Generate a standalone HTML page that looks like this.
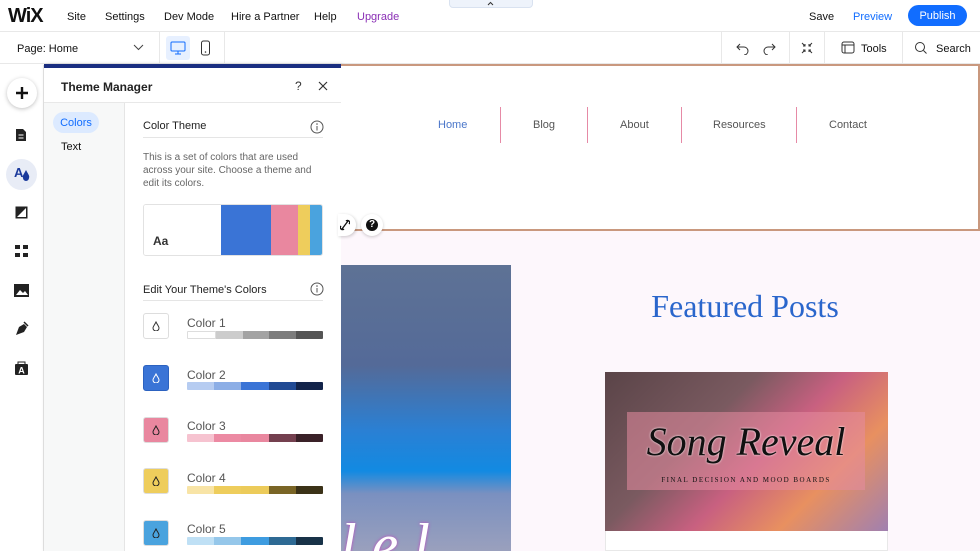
<!DOCTYPE html>
<html><head><meta charset="utf-8"><style>
*{box-sizing:border-box;margin:0;padding:0}
body{width:980px;height:551px;overflow:hidden;font-family:"Liberation Sans",sans-serif;background:#fff;position:relative;color:#222}
.a{position:absolute}
.t{font-size:11px;color:#111}
.sw{position:absolute;left:143px;width:26px;height:26px;border-radius:3px;border:1px solid #ddd;display:flex;align-items:center;justify-content:center}
.lbl{position:absolute;left:187px;font-size:12px;color:#555}
.bar{position:absolute;left:187px;width:136px;height:8px;display:flex;border-radius:1px;overflow:hidden}
.bar i{flex:1}
.nav{position:absolute;top:119px;font-size:11px;color:#555}
.sep{position:absolute;top:107px;width:1px;height:36px;background:#e68aa6}
</style></head><body>
<div class="a" style="left:0;top:0;width:980px;height:32px;border-bottom:1px solid #e8e8e8"></div>
<div class="a" style="left:8px;top:5px;font-size:20px;font-weight:bold;letter-spacing:-1px;color:#111">WiX</div>
<div class="a t" style="left:67px;top:11px">Site</div>
<div class="a t" style="left:105px;top:11px">Settings</div>
<div class="a t" style="left:164px;top:11px">Dev Mode</div>
<div class="a t" style="left:231px;top:11px">Hire a Partner</div>
<div class="a t" style="left:314px;top:11px">Help</div>
<div class="a t" style="left:357px;top:11px;color:#8a2fb5">Upgrade</div>
<div class="a" style="left:449px;top:-2px;width:84px;height:10px;background:#eef3fb;border:1px solid #d9e2f0;border-radius:0 0 4px 4px"></div>
<svg class="a" style="left:487px;top:1px" width="7" height="5"><path d="M1 4l2.5-2.5L6 4" stroke="#333" fill="none"/></svg>
<div class="a t" style="left:809px;top:11px">Save</div>
<div class="a t" style="left:853px;top:11px;color:#116dff">Preview</div>
<div class="a" style="left:908px;top:5px;width:59px;height:21px;border-radius:11px;background:#116dff;color:#fff;font-size:11px;text-align:center;line-height:22px;padding-top:0">Publish</div>
<div class="a" style="left:0;top:32px;width:980px;height:32px;border-bottom:1px solid #e8e8e8"></div>
<div class="a t" style="left:17px;top:43px">Page: Home</div>
<svg class="a" style="left:133px;top:44px" width="11" height="8"><path d="M1 1l4.5 4.5L10 1" stroke="#444" fill="none"/></svg>
<div class="a" style="left:159px;top:32px;width:1px;height:32px;background:#e8e8e8"></div>
<div class="a" style="left:166px;top:36px;width:24px;height:24px;background:#e7f0ff;border-radius:3px"></div>
<svg class="a" style="left:170px;top:41px" width="16" height="14"><rect x="1" y="1" width="14" height="9" rx="1" fill="none" stroke="#116dff"/><path d="M8 10v3M5 13h6" stroke="#116dff"/></svg>
<svg class="a" style="left:200px;top:40px" width="12" height="16"><rect x="1.5" y="1" width="8" height="14" rx="2" fill="none" stroke="#333"/><circle cx="5.5" cy="12" r=".8" fill="#333"/></svg>
<div class="a" style="left:224px;top:32px;width:1px;height:32px;background:#e8e8e8"></div>
<div class="a" style="left:721px;top:32px;width:1px;height:32px;background:#e8e8e8"></div>
<div class="a" style="left:789px;top:32px;width:1px;height:32px;background:#e8e8e8"></div>
<div class="a" style="left:824px;top:32px;width:1px;height:32px;background:#e8e8e8"></div>
<div class="a" style="left:902px;top:32px;width:1px;height:32px;background:#e8e8e8"></div>
<svg class="a" style="left:736px;top:41px" width="40" height="14"><path d="M4 3L1 6l3 3M1 6h7a4 4 0 010 8" stroke="#333" fill="none"/><path d="M36 3l3 3-3 3M39 6h-7a4 4 0 000 8" stroke="#333" fill="none"/></svg>
<svg class="a" style="left:800px;top:42px" width="14" height="12"><path d="M2 1l3 3M5 2v2H3M12 1L9 4M9 2v2h2M2 11l3-3M3 8h2v2M12 11L9 8M11 8H9v2" stroke="#333" fill="none"/></svg>
<svg class="a" style="left:841px;top:41px" width="14" height="13"><rect x="1" y="1" width="12" height="11" rx="2" fill="none" stroke="#333"/><path d="M1 4h12M4 4v8" stroke="#333"/></svg>
<div class="a t" style="left:861px;top:43px">Tools</div>
<svg class="a" style="left:914px;top:41px" width="14" height="14"><circle cx="6" cy="6" r="4.5" fill="none" stroke="#333"/><path d="M9.5 9.5l3 3" stroke="#333"/></svg>
<div class="a t" style="left:936px;top:43px">Search</div>
<div class="a" style="left:0;top:65px;width:44px;height:486px;background:#fff;border-right:1px solid #e5e5e5"></div>
<div class="a" style="left:7px;top:78px;width:30px;height:30px;border-radius:50%;background:#fff;box-shadow:0 1px 4px rgba(0,0,0,.25)"></div>
<svg class="a" style="left:14px;top:85px" width="16" height="16"><path d="M8 2v12M2 8h12" stroke="#111" stroke-width="2.4"/></svg>
<svg class="a" style="left:15px;top:128px" width="12" height="14"><path d="M1 1h7l3 3v9H1z" fill="#222"/><path d="M3.5 7h5M3.5 10h5" stroke="#fff"/></svg>
<div class="a" style="left:6px;top:159px;width:31px;height:31px;border-radius:50%;background:#e8ecf6"></div>
<div class="a" style="left:14px;top:165px;font-size:13px;font-weight:bold;color:#1b3a9c">A</div>
<svg class="a" style="left:22px;top:170px" width="8" height="11"><path d="M4 0C2 4 0 6 1 8a3 3 0 006 0C8 6 6 4 4 0z" fill="#1b3a9c"/></svg>
<svg class="a" style="left:15px;top:206px" width="13" height="13"><rect x=".5" y=".5" width="12" height="12" fill="#222"/><path d="M11 2v9H2z" fill="#fff"/></svg>
<svg class="a" style="left:15px;top:245px" width="13" height="13"><rect width="5" height="4" fill="#222"/><rect x="8" width="5" height="4" fill="#222"/><rect y="8" width="5" height="4" fill="#222"/><rect x="8" y="8" width="5" height="4" fill="#222"/></svg>
<svg class="a" style="left:14px;top:284px" width="15" height="13"><rect width="15" height="13" fill="#222"/><path d="M2 11l4-5 3 3 2-2 3 4z" fill="#fff"/></svg>
<svg class="a" style="left:14px;top:321px" width="15" height="15"><path d="M2 14l3-8 5-3 3 3-3 5z" fill="#222"/><path d="M10 1l4 4" stroke="#222" stroke-width="1.5"/></svg>
<svg class="a" style="left:14px;top:360px" width="15" height="16"><path d="M4 4V2h7v2" stroke="#222" fill="none"/><rect x="1" y="4" width="13" height="11" rx="1" fill="#222"/><text x="7.5" y="13.5" font-size="9" fill="#fff" text-anchor="middle" font-family="Liberation Sans" font-weight="bold">A</text></svg>
<div class="a" style="left:44px;top:64px;width:297px;height:487px;background:#fff;box-shadow:1px 0 4px rgba(0,0,0,.15)"></div>
<div class="a" style="left:44px;top:64px;width:297px;height:4px;background:#1a2e80"></div>
<div class="a" style="left:61px;top:80px;font-size:12px;font-weight:bold;color:#222">Theme Manager</div>
<div class="a" style="left:295px;top:79px;font-size:12px;color:#333">?</div>
<svg class="a" style="left:318px;top:81px" width="10" height="10"><path d="M1 1l8 8M9 1L1 9" stroke="#333" stroke-width="1.2"/></svg>
<div class="a" style="left:44px;top:102px;width:297px;height:1px;background:#e8e8e8"></div>
<div class="a" style="left:44px;top:103px;width:81px;height:448px;background:#f7f8f8;border-right:1px solid #e5e5e5"></div>
<div class="a" style="left:53px;top:112px;width:46px;height:21px;border-radius:11px;background:#dceaff;color:#116dff;font-size:11px;text-align:center;line-height:22px">Colors</div>
<div class="a t" style="left:61px;top:141px">Text</div>
<div class="a" style="left:143px;top:120px;font-size:11px;color:#222">Color Theme</div>
<svg class="a" style="left:310px;top:120px" width="14" height="14"><circle cx="7" cy="7" r="6" fill="none" stroke="#555"/><path d="M7 6v4.5" stroke="#555"/><circle cx="7" cy="4" r=".8" fill="#555"/></svg>
<div class="a" style="left:143px;top:137px;width:180px;height:1px;background:#e5e5e5"></div>
<div class="a" style="left:143px;top:151px;width:175px;font-size:10px;line-height:13px;color:#666">This is a set of colors that are used across your site. Choose a theme and edit its colors.</div>
<div class="a" style="left:143px;top:204px;width:180px;height:52px;border:1px solid #e2e2e2;border-radius:3px;overflow:hidden;display:flex">
<div style="width:77px;background:#fff;position:relative"><span style="position:absolute;left:9px;top:29px;font-size:12px;font-weight:bold;color:#333">Aa</span></div>
<div style="width:50px;background:#3a74d6"></div><div style="width:27px;background:#e9879f"></div><div style="width:12px;background:#eecd5c"></div><div style="flex:1;background:#4aa3de"></div></div>
<div class="a" style="left:143px;top:284px;font-size:11px;color:#222">Edit Your Theme's Colors</div>
<svg class="a" style="left:310px;top:282px" width="14" height="14"><circle cx="7" cy="7" r="6" fill="none" stroke="#555"/><path d="M7 6v4.5" stroke="#555"/><circle cx="7" cy="4" r=".8" fill="#555"/></svg>
<div class="a" style="left:143px;top:300px;width:180px;height:1px;background:#e5e5e5"></div>

<div class="sw" style="top:313px;background:#fff"><svg width="8" height="10"><path d="M4 1C2.5 4 1 5.5 1 7a3 3 0 006 0C7 5.5 5.5 4 4 1z" fill="none" stroke="#333"/></svg></div>
<div class="lbl" style="top:316px">Color 1</div>
<div class="bar" style="top:331px"><i style="background:#fff;border:1px solid #ddd"></i><i style="background:#ccc"></i><i style="background:#a3a3a3"></i><i style="background:#7d7d7d"></i><i style="background:#555"></i></div>
<div class="sw" style="top:365px;background:#3a74d6;border-color:#2c62c0"><svg width="8" height="10"><path d="M4 1C2.5 4 1 5.5 1 7a3 3 0 006 0C7 5.5 5.5 4 4 1z" fill="none" stroke="#fff"/></svg></div>
<div class="lbl" style="top:368px">Color 2</div>
<div class="bar" style="top:382px"><i style="background:#b6ccf1"></i><i style="background:#8caee6"></i><i style="background:#3a74d6"></i><i style="background:#214a94"></i><i style="background:#13244a"></i></div>
<div class="sw" style="top:417px;background:#e9879f"><svg width="8" height="10"><path d="M4 1C2.5 4 1 5.5 1 7a3 3 0 006 0C7 5.5 5.5 4 4 1z" fill="none" stroke="#222"/></svg></div>
<div class="lbl" style="top:419px">Color 3</div>
<div class="bar" style="top:434px"><i style="background:#f6c3d0"></i><i style="background:#ec8aa3"></i><i style="background:#e9879f"></i><i style="background:#74404f"></i><i style="background:#3a2128"></i></div>
<div class="sw" style="top:468px;background:#eecd5c"><svg width="8" height="10"><path d="M4 1C2.5 4 1 5.5 1 7a3 3 0 006 0C7 5.5 5.5 4 4 1z" fill="none" stroke="#222"/></svg></div>
<div class="lbl" style="top:471px">Color 4</div>
<div class="bar" style="top:486px"><i style="background:#f8e4a6"></i><i style="background:#eecd5c"></i><i style="background:#eccb5a"></i><i style="background:#7a6526"></i><i style="background:#3b3218"></i></div>
<div class="sw" style="top:520px;background:#4aa3de"><svg width="8" height="10"><path d="M4 1C2.5 4 1 5.5 1 7a3 3 0 006 0C7 5.5 5.5 4 4 1z" fill="none" stroke="#222"/></svg></div>
<div class="lbl" style="top:522px">Color 5</div>
<div class="bar" style="top:537px"><i style="background:#bfe0f5"></i><i style="background:#95c7ea"></i><i style="background:#3e9ce0"></i><i style="background:#2e6a94"></i><i style="background:#183248"></i></div>

<div class="a" style="left:341px;top:64px;width:639px;height:487px;background:#fdf7fc"></div>
<div class="a" style="left:341px;top:64px;width:639px;height:167px;background:#fff;border:2px solid #c9987e;border-left:none"></div>
<div class="nav" style="left:438px;color:#4a76c9">Home</div>
<div class="sep" style="left:500px"></div>
<div class="nav" style="left:533px">Blog</div>
<div class="sep" style="left:587px"></div>
<div class="nav" style="left:620px">About</div>
<div class="sep" style="left:681px"></div>
<div class="nav" style="left:713px">Resources</div>
<div class="sep" style="left:796px"></div>
<div class="nav" style="left:829px">Contact</div>
<div class="a" style="left:338px;top:214px;width:18px;height:22px;border-radius:0 11px 11px 0;background:#fff;box-shadow:1px 1px 3px rgba(0,0,0,.2)"></div>
<svg class="a" style="left:340px;top:219px" width="10" height="12"><path d="M2 10l6-8M1 7a2 2 0 003 3M9 5a2 2 0 00-3-3" stroke="#111" fill="none" stroke-width="1.3"/></svg>
<div class="a" style="left:361px;top:214px;width:22px;height:22px;border-radius:50%;background:#fff;box-shadow:0 1px 3px rgba(0,0,0,.2)"></div>
<div class="a" style="left:366px;top:219px;width:12px;height:12px;border-radius:50%;background:#111;color:#fff;font-size:10px;font-weight:bold;text-align:center;line-height:12px">?</div>
<div class="a" style="left:341px;top:265px;width:170px;height:286px;background:linear-gradient(180deg,#5e7295 0%,#546a98 35%,#2a80d4 58%,#128ae2 72%,#7a90c0 80%,#9aa0bd 100%)"></div>
<div class="a" style="left:340px;top:505px;width:171px;height:46px;font-family:'Liberation Serif',serif;font-style:italic;font-size:60px;color:#fff;text-shadow:0 0 3px #c040c0;overflow:hidden;line-height:80px">l e l</div>
<div class="a" style="left:600px;top:288px;width:290px;text-align:center;font-family:'Liberation Serif',serif;font-size:32px;color:#2a66cc">Featured Posts</div>
<div class="a" style="left:605px;top:372px;width:283px;height:179px;background:#fff;border:1px solid #e8e8e8"></div>
<div class="a" style="left:605px;top:372px;width:283px;height:159px;background:linear-gradient(135deg,#5a4448 0%,#7a5a60 35%,#c86080 55%,#e89060 75%,#a080b0 100%)"></div>
<div class="a" style="left:627px;top:412px;width:238px;height:78px;background:rgba(230,140,160,.55)"></div>
<div class="a" style="left:627px;top:418px;width:238px;text-align:center;font-family:'Liberation Serif',serif;font-style:italic;font-size:40px;color:#111;text-shadow:0 0 2px #fff">Song Reveal</div>
<div class="a" style="left:627px;top:476px;width:238px;text-align:center;font-family:'Liberation Serif',serif;font-size:7px;letter-spacing:1.5px;color:#111">FINAL DECISION AND MOOD BOARDS</div>
</body></html>
